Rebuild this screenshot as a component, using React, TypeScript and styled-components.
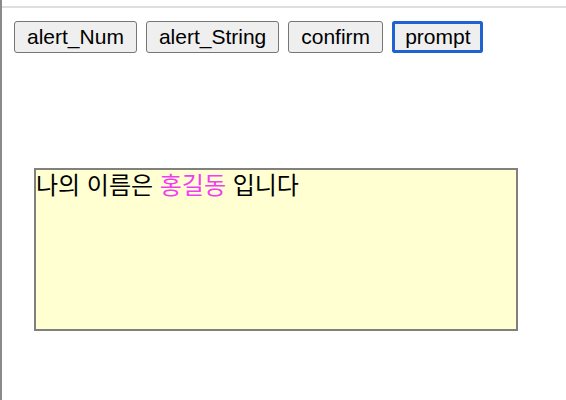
import styled, { createGlobalStyle } from 'styled-components';

const GlobalStyle = createGlobalStyle`
    html, body {
        margin: 0;
        padding: 0;
        background: #fff;
        font-family: 'Liberation Sans', Arial, 'Noto Sans CJK KR', sans-serif;
    }
`;

const Frame = styled.div`
    min-height: 400px;
    box-sizing: border-box;
    border-left: 2px solid #8a8a8a;
    padding-top: 6px;
`;

const TopRule = styled.div`
    height: 2px;
    background: #dedede;
`;

const Toolbar = styled.div`
    display: flex;
    gap: 9px;
    padding: 13px 0 0 12px;
`;

const Button = styled.button<{ $focused?: boolean }>`
    box-sizing: border-box;
    height: 32px;
    padding: 0 12px;
    font-family: 'Liberation Sans', Arial, sans-serif;
    font-size: 21px;
    color: #000;
    background: #efefef;
    border: 1px solid #767676;
    border-radius: 3px;
    outline: ${({ $focused }) => ($focused ? '3px solid #1f62d1' : 'none')};
    outline-offset: -3px;
    border-color: ${({ $focused }) => ($focused ? '#1f62d1' : '#767676')};
`;

const Output = styled.div`
    box-sizing: border-box;
    width: 484px;
    height: 163px;
    margin: 115px 0 0 32px;
    padding: 1px 0 0 0;
    background: #ffffd2;
    border: 2px solid #808080;
    font-family: 'Liberation Sans', Arial, 'Noto Sans CJK KR', sans-serif;
    font-size: 24px;
    line-height: 30px;
    color: #000;
`;

const Name = styled.span`
    color: #f23ef2;
`;

const App = () => {
    return (
        <>
            <GlobalStyle />
            <Frame>
                <TopRule />
                <Toolbar>
                    <Button>alert_Num</Button>
                    <Button>alert_String</Button>
                    <Button>confirm</Button>
                    <Button $focused>prompt</Button>
                </Toolbar>
                <Output>
                    나의 이름은 <Name>홍길동</Name> 입니다
                </Output>
            </Frame>
        </>
    );
};

export default App;
